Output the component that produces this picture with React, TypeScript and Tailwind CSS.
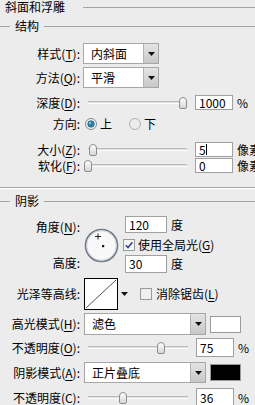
import React from 'react'

const LINE = 'bg-[#a4a4a4]'

function Label({ children, className = '' }: { children: React.ReactNode; className?: string }) {
  return <div className={`w-[80px] shrink-0 text-right whitespace-nowrap ${className}`}>{children}</div>
}

function U({ children }: { children: React.ReactNode }) {
  return <span className="underline underline-offset-[2px]">{children}</span>
}

function Legend({ text }: { text: string }) {
  return (
    <div className="flex items-center h-[14px]">
      <div className={`w-[10px] h-px ${LINE}`} />
      <span className="mx-[5px]">{text}</span>
      <div className={`flex-1 h-px ${LINE}`} />
    </div>
  )
}

function Arrow() {
  return (
    <div className="w-[15px] h-full border-l border-[#b4b4b4] bg-gradient-to-b from-[#e4e4e4] to-[#c8c8c8] flex items-center justify-center">
      <svg width="7" height="4" viewBox="0 0 7 4">
        <path d="M0 0h7L3.5 4z" fill="#111" />
      </svg>
    </div>
  )
}

function Select({ value, w }: { value: string; w: string }) {
  return (
    <div className={`${w} h-full bg-white border border-[#a6a6a6] flex items-center`}>
      <span className="flex-1 pl-[7px]">{value}</span>
      <Arrow />
    </div>
  )
}

function Slider({ thumb, w = 'w-[107px]' }: { thumb: number; w?: string }) {
  // thumb: centre x in page coordinates; slider starts at x=84
  return (
    <div className={`relative ${w} h-full flex items-center px-[4px]`}>
      <div className="w-full h-[3px] border-t border-[#bdbdbd] border-b border-b-white bg-[#dedede]" />
      <div
        className="absolute top-1/2 -translate-y-1/2 w-[8px] h-[12px] rounded-t-[4px] rounded-b-[2px] border border-[#8c8c8c] bg-gradient-to-b from-white to-[#d6d6d6]"
        style={{ left: thumb - 84 - 4 }}
      />
    </div>
  )
}

function Input({ value, w = 'w-[38px]', caret = false }: { value: string; w?: string; caret?: boolean }) {
  return (
    <div className={`${w} h-full bg-white border border-[#a0a0a0] flex items-center pl-[3px]`}>
      {value}
      {caret && <span className="w-px h-[11px] bg-black" />}
    </div>
  )
}

function Radio({ on }: { on: boolean }) {
  return (
    <svg width="12" height="12" viewBox="0 0 12 12">
      <circle cx="6" cy="6" r="5.5" fill={on ? '#f4f4f4' : '#ececec'} stroke={on ? '#7e8a96' : '#b0b0b0'} />
      {on && <circle cx="6" cy="6" r="3.3" fill="#2f7ea6" stroke="#1c5a7a" strokeWidth="0.6" />}
      {on && <circle cx="5" cy="5" r="1" fill="#a9d7ee" />}
    </svg>
  )
}

function Check({ on }: { on: boolean }) {
  return (
    <svg width="12" height="12" viewBox="0 0 12 12">
      <rect x="0.5" y="0.5" width="11" height="11" fill={on ? '#f6f6f6' : '#f0f0f0'} stroke="#9a9a9a" />
      {on && <path d="M2.8 6.2l2.2 2.4 4.4-5.4" fill="none" stroke="#3a3f9a" strokeWidth="1.6" />}
    </svg>
  )
}

function Swatch({ color }: { color: string }) {
  return <div className={`w-[31px] h-[17px] border border-[#9a9a9a] ${color}`} />
}

export default function App() {
  return (
    <div className="w-[255px] h-[405px] overflow-hidden bg-[#ececec] text-[12px] leading-[14px] text-black font-['Noto_Sans_CJK_SC','Noto_Sans',sans-serif]">
      {/* title */}
      <div className="flex items-center h-[14px] pl-[5px]">
        <span>斜面和浮雕</span>
        <div className={`flex-1 h-px ml-[18px] ${LINE}`} />
      </div>

      <div className="mt-[5px]">
        <Legend text="结构" />
      </div>

      <div className="flex items-center h-[21px] mt-[10px]">
        <Label>样式(<U>T</U>):</Label>
        <div className="ml-[3px] h-full">
          <Select value="内斜面" w="w-[76px]" />
        </div>
      </div>

      <div className="flex items-center h-[21px] mt-[3px]">
        <Label>方法(<U>Q</U>):</Label>
        <div className="ml-[3px] h-full">
          <Select value="平滑" w="w-[76px]" />
        </div>
      </div>

      <div className="flex items-center h-[15px] mt-[7px]">
        <Label>深度(<U>D</U>):</Label>
        <div className="ml-[4px] h-full">
          <Slider thumb={183} />
        </div>
        <div className="ml-[4px] h-full">
          <Input value="1000" />
        </div>
        <span className="ml-[4px]">%</span>
      </div>

      <div className="flex items-center h-[14px] mt-[7px]">
        <Label>方向:</Label>
        <div className="ml-[5px] flex items-center">
          <Radio on />
          <span className="ml-[3px]">上</span>
          <div className="ml-[17px]">
            <Radio on={false} />
          </div>
          <span className="ml-[3px]">下</span>
        </div>
      </div>

      <div className="flex items-center h-[15px] mt-[11px]">
        <Label>大小(<U>Z</U>):</Label>
        <div className="ml-[4px] h-full">
          <Slider thumb={93} />
        </div>
        <div className="ml-[4px] h-full">
          <Input value="5" caret />
        </div>
        <span className="ml-[4px] whitespace-nowrap">像素</span>
      </div>

      <div className="flex items-center h-[15px] mt-[1px]">
        <Label>软化(<U>F</U>):</Label>
        <div className="ml-[4px] h-full">
          <Slider thumb={88} />
        </div>
        <div className="ml-[4px] h-full">
          <Input value="0" />
        </div>
        <span className="ml-[4px] whitespace-nowrap">像素</span>
      </div>

      <div className="mt-[14px] h-px bg-[#a4a4a4]" />
      <div className="h-px bg-white" />

      <div className="mt-[5px]">
        <Legend text="阴影" />
      </div>

      {/* angle / altitude block */}
      <div className="flex h-[57px] mt-[8px]">
        <div className="w-[80px] shrink-0 flex flex-col">
          <Label className="mt-[4px]">角度(<U>N</U>):</Label>
          <Label className="mt-[22px]">高度:</Label>
        </div>
        <div className="ml-[4px] mt-[12px]">
          <svg width="35" height="35" viewBox="0 0 35 35">
            <circle cx="17.5" cy="17.5" r="16" fill="#f8f8f8" stroke="#6f7a88" strokeWidth="1.6" />
            <circle cx="17.5" cy="17.5" r="14.8" fill="none" stroke="#c8ccd4" strokeWidth="0.8" />
            <path d="M14 5.5v6M11 8.5h6" stroke="#222" strokeWidth="1" />
            <rect x="18" y="17" width="2.2" height="2.2" fill="#111" />
          </svg>
        </div>
        <div className="ml-[6px] flex flex-col">
          <div className="flex items-center h-[17px]">
            <div className="h-full">
              <Input value="120" w="w-[42px]" />
            </div>
            <span className="ml-[4px]">度</span>
          </div>
          <div className="flex items-center h-[12px] mt-[6px] -ml-[2px]">
            <Check on />
            <span className="ml-[3px] whitespace-nowrap">使用全局光(<U>G</U>)</span>
          </div>
          <div className="flex items-center h-[18px] mt-[4px]">
            <div className="h-full">
              <Input value="30" w="w-[42px]" />
            </div>
            <span className="ml-[4px]">度</span>
          </div>
        </div>
      </div>

      {/* gloss contour */}
      <div className="flex items-center h-[32px] mt-[5px]">
        <Label>光泽等高线:</Label>
        <div className="ml-[4px] flex items-start h-full">
          <div className="w-[34px] h-full bg-white border border-black">
            <svg width="32" height="30" viewBox="0 0 32 30">
              <path d="M1 29L31 1" stroke="#555" strokeWidth="1" />
            </svg>
          </div>
          <div className="ml-[2px] w-[9px] h-full flex items-center justify-center">
            <svg width="7" height="4" viewBox="0 0 7 4">
              <path d="M0 0h7L3.5 4z" fill="#111" />
            </svg>
          </div>
        </div>
        <div className="ml-[11px] flex items-center">
          <Check on={false} />
          <span className="ml-[4px] whitespace-nowrap">消除锯齿(<U>L</U>)</span>
        </div>
      </div>

      <div className="flex items-center h-[22px] mt-[3px]">
        <Label>高光模式(<U>H</U>):</Label>
        <div className="ml-[4px] h-full">
          <Select value="滤色" w="w-[122px]" />
        </div>
        <div className="ml-[4px]">
          <Swatch color="bg-white" />
        </div>
      </div>

      <div className="flex items-center h-[19px] mt-[3px]">
        <Label>不透明度(<U>O</U>):</Label>
        <div className="ml-[4px] h-full">
          <Slider thumb={161} w="w-[108px]" />
        </div>
        <div className="ml-[4px] h-full">
          <Input value="75" />
        </div>
        <span className="ml-[4px]">%</span>
      </div>

      <div className="flex items-center h-[21px] mt-[5px]">
        <Label>阴影模式(<U>A</U>):</Label>
        <div className="ml-[4px] h-full">
          <Select value="正片叠底" w="w-[122px]" />
        </div>
        <div className="ml-[4px]">
          <Swatch color="bg-black" />
        </div>
      </div>

      <div className="flex items-center h-[19px] mt-[5px]">
        <Label>不透明度(<U>C</U>):</Label>
        <div className="ml-[4px] h-full">
          <Slider thumb={123} w="w-[108px]" />
        </div>
        <div className="ml-[4px] h-full">
          <Input value="36" />
        </div>
        <span className="ml-[4px]">%</span>
      </div>
    </div>
  )
}
